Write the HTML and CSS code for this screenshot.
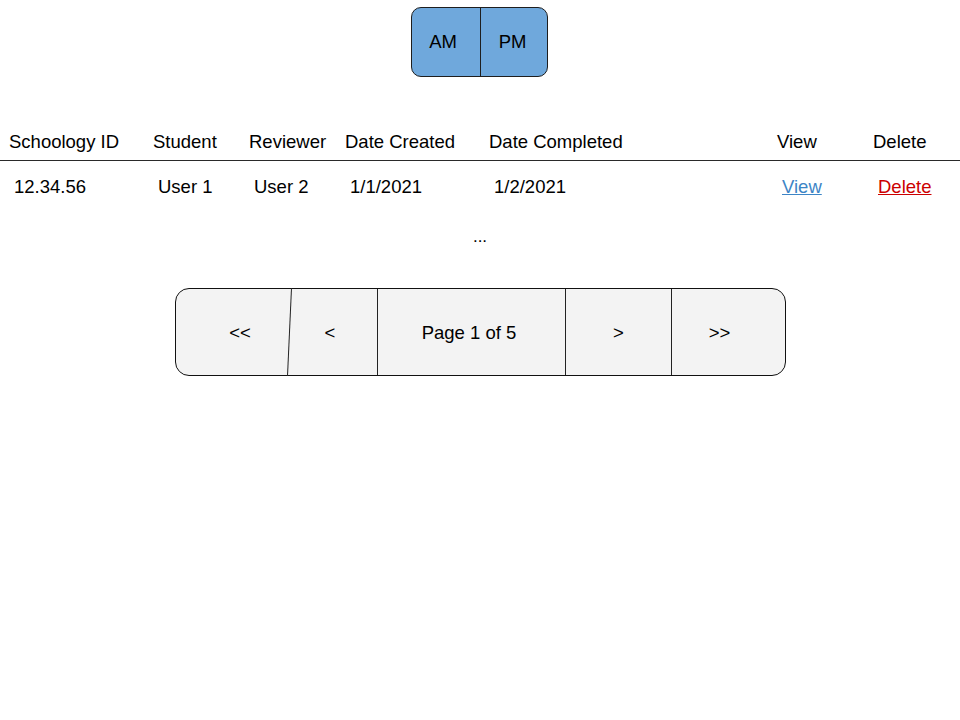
FILE: index.html
```html
<!DOCTYPE html>
<html lang="en">
<head>
<meta charset="utf-8">
<title>Reviews</title>
<link rel="stylesheet" href="styles.css">
</head>
<body>
  <div class="toggle">
    <div class="toggle-seg">AM</div>
    <div class="toggle-seg toggle-right">PM</div>
  </div>

  <div class="table">
    <div class="row head">
      <div class="cell">Schoology ID</div>
      <div class="cell">Student</div>
      <div class="cell">Reviewer</div>
      <div class="cell">Date Created</div>
      <div class="cell">Date Completed</div>
      <div class="cell">View</div>
      <div class="cell">Delete</div>
    </div>
    <div class="row data">
      <div class="cell">12.34.56</div>
      <div class="cell">User 1</div>
      <div class="cell">User 2</div>
      <div class="cell">1/1/2021</div>
      <div class="cell">1/2/2021</div>
      <div class="cell"><a class="link-view" href="#">View</a></div>
      <div class="cell"><a class="link-delete" href="#">Delete</a></div>
    </div>
  </div>

  <div class="more">...</div>

  <div class="pager">
    <div class="pg pg-first">&lt;&lt;</div>
    <div class="pg pg-prev">&lt;</div>
    <div class="pg pg-label">Page 1 of 5</div>
    <div class="pg pg-next">&gt;</div>
    <div class="pg pg-last">&gt;&gt;</div>
  </div>
</body>
</html>
```

FILE: styles.css
```css
html, body {
  margin: 0;
  padding: 0;
  background: #ffffff;
}
body {
  font-family: "Liberation Sans", Arial, sans-serif;
  font-size: 18.5px;
  color: #000000;
}

.toggle {
  display: flex;
  width: 137px;
  height: 70px;
  margin: 7px 0 0 411px;
  box-sizing: border-box;
  border: 1px solid #1e1e1e;
  border-radius: 10px;
  background: #6fa8dc;
  overflow: hidden;
}
.toggle-seg {
  flex: 0 0 68px;
  display: flex;
  align-items: center;
  justify-content: center;
  padding-right: 6px;
  box-sizing: border-box;
}
.toggle-right {
  flex: 1 1 auto;
  border-left: 1px solid #1e1e1e;
  padding-left: 0;
  padding-right: 3px;
}

.table {
  margin-top: 43px;
}
.row {
  display: grid;
  grid-template-columns: 144px 96px 96px 144px 288px 96px 1fr;
  padding-left: 9px;
  white-space: nowrap;
}
.head {
  height: 40px;
  line-height: 44px;
  border-bottom: 1px solid #2a2a2a;
}
.data {
  height: 50px;
  line-height: 52px;
}
.data .cell {
  padding-left: 5px;
}
.link-view {
  color: #3d85c6;
  text-decoration: underline;
}
.link-delete {
  color: #cc0000;
  text-decoration: underline;
}

.more {
  height: 44px;
  line-height: 52px;
  text-align: center;
  font-size: 17px;
}

.pager {
  display: flex;
  width: 611px;
  height: 88px;
  margin: 33px 0 0 175px;
  box-sizing: border-box;
  border: 1px solid #111111;
  border-radius: 14px;
  background: #f3f3f3;
}
.pg {
  display: flex;
  align-items: center;
  justify-content: center;
  box-sizing: border-box;
  position: relative;
  padding-top: 1px;
}
.pg-first {
  flex: 0 0 113px;
  padding-left: 15px;
}
.pg-prev {
  flex: 0 0 88px;
  padding-right: 6px;
}
.pg-prev::before {
  content: "";
  position: absolute;
  left: 2px;
  top: -1px;
  height: 90px;
  border-left: 1px solid #222222;
  transform: rotate(2.6deg);
  transform-origin: top left;
}
.pg-label {
  flex: 0 0 188px;
  border-left: 1px solid #222222;
  padding-right: 5px;
}
.pg-next {
  flex: 0 0 106px;
  border-left: 1px solid #222222;
}
.pg-last {
  flex: 1 1 auto;
  border-left: 1px solid #222222;
  padding-right: 18px;
}
```
